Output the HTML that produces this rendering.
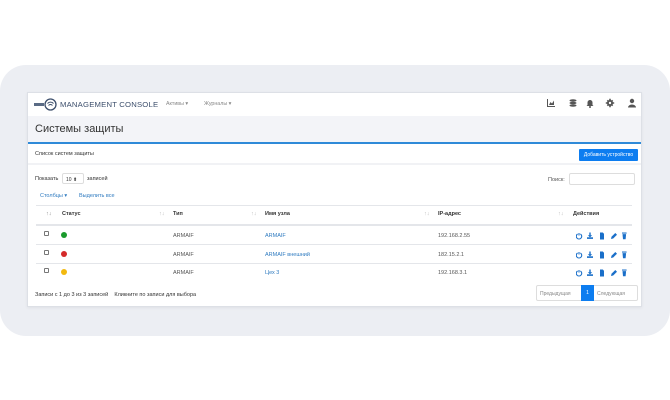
<!DOCTYPE html>
<html><head><meta charset="utf-8"><style>
*{margin:0;padding:0;box-sizing:border-box}
body{width:670px;height:400px;background:#fff;font-family:"Liberation Sans",sans-serif;position:relative;overflow:hidden;color:#333}
.bg{position:absolute;left:0;top:65px;width:670px;height:271px;background:#eceef3;border-radius:26px}
.card{position:absolute;left:27px;top:92px;width:615px;height:215px;background:#fff;border:1px solid #dde0e6;box-shadow:0 1px 3px rgba(0,0,0,.06)}
.nav{position:absolute;left:0;top:0;width:100%;height:23px;background:#fff}
.abs{position:absolute;white-space:nowrap}
.title{position:absolute;left:0;top:23px;width:100%;height:28px;background:#f3f4f8;border-bottom:2px solid #2f8ad8}
.sub{position:absolute;left:0;top:53px;width:100%;height:19px;background:#fff;border-bottom:2px solid #f1f2f5}
.t6{font-size:5.5px}
.link{color:#2f7bc0}
.dot{position:absolute;width:6px;height:6px;border-radius:50%}
.cb{position:absolute;width:5px;height:5px;border:1px solid #777;border-radius:1px}
.rowline{position:absolute;left:8px;width:596px;height:1px;background:#e4e6ea}
</style></head><body>
<svg width="0" height="0" style="position:absolute"><defs>
<g id="acts" fill="#1a6fc9">
 <path d="M3 1v2.5" stroke="#1a6fc9" stroke-width="1.1" fill="none"/><path d="M1.6 2a2.7 2.7 0 1 0 2.8 0" stroke="#1a6fc9" stroke-width="1.1" fill="none"/>
 <path d="M13.3 0.5h1.4v2.7h1.5l-2.2 2.2-2.2-2.2h1.5z"/><rect x="11" y="5.3" width="6" height="1.6"/>
 <path d="M24 0.5h2.8l1.2 1.2v5.8h-4z"/>
 <path d="M35 7l0.5-2.2 3.8-3.8 1.7 1.7-3.8 3.8z"/>
 <rect x="46" y="0.5" width="4.6" height="1.1"/><path d="M46.5 2.1h3.6l-0.5 5.2h-2.6z"/>
</g></defs></svg>
<div class="bg"></div>
<div class="card">
 <div class="nav">
  <svg class="abs" style="left:6px;top:5px" width="24" height="13"><rect x="0" y="5" width="10" height="3" fill="#5a6b85"/><circle cx="16.5" cy="6.5" r="5.5" fill="#fff" stroke="#3d4f6c" stroke-width="1.3"/><path d="M13.5 5.5a4 4 0 0 1 6 0M14.5 7.5a2.5 2.5 0 0 1 4 0" stroke="#3d4f6c" fill="none" stroke-width="1"/></svg>
  <div class="abs" style="left:32px;top:7px;font-size:7.7px;letter-spacing:.2px;color:#3d4f6c">MANAGEMENT CONSOLE</div>
  <div class="abs" style="left:138px;top:8px;font-size:5.3px;color:#888">Активы ▾</div>
  <div class="abs" style="left:176px;top:8px;font-size:5.3px;color:#888">Журналы ▾</div>
  <svg class="abs" style="left:518px;top:5px" width="92" height="12" fill="#555">
   <path d="M1 1v8h8v-1h-7v-7z"/><path d="M3 7l1.5-3 1.5 1.5 2-3v4.5h-5z"/>
   <ellipse cx="27" cy="2.5" rx="3.5" ry="1.3"/><ellipse cx="27" cy="5" rx="3.5" ry="1.3"/><ellipse cx="27" cy="7.5" rx="3.5" ry="1.3"/>
   <path d="M44 2a2.5 2.5 0 0 1 2.5 2.5v2.5l1 1h-7l1-1v-2.5a2.5 2.5 0 0 1 2.5-2.5z"/><circle cx="44" cy="9" r="1"/>
   <circle cx="64" cy="5" r="3"/><path d="M63.2 0.8h1.6v8.4h-1.6zM59.8 4.2h8.4v1.6h-8.4z"/><path d="M60.8 2.9l1.1-1.1 5.3 5.3-1.1 1.1zM66.1 1.8l1.1 1.1-5.3 5.3-1.1-1.1z"/><circle cx="64" cy="5" r="1.2" fill="#fff"/>
   <circle cx="86" cy="3" r="2.2"/><path d="M82 9.5a4 3 0 0 1 8 0z"/>
  </svg>
 </div>
 <div class="title"><div class="abs" style="left:7px;top:7px;font-size:11px;color:#333">Системы защиты</div></div>
 <div class="sub"><div class="abs t6" style="left:7px;top:5px">Список систем защиты</div>
  <div class="abs" style="left:551px;top:3px;width:59px;height:12px;background:#0d7df0;border-radius:1px;color:#fff;font-size:5px;line-height:12px;text-align:center">Добавить устройство</div></div>
 <div class="abs t6" style="left:7px;top:83px">Показать</div>
 <div class="abs" style="left:34px;top:80px;width:22px;height:11px;border:1px solid #ddd;border-radius:2px;font-size:5px;padding:3px 0 0 3px">10 ⬍</div>
 <div class="abs t6" style="left:59px;top:83px">записей</div>
 <div class="abs t6" style="left:520px;top:84px;color:#555">Поиск:</div>
 <div class="abs" style="left:541px;top:80px;width:66px;height:12px;border:1px solid #ddd;border-radius:2px"></div>
 <div class="abs t6 link" style="left:12px;top:100px">Столбцы ▾</div>
 <div class="abs t6 link" style="left:51px;top:100px">Выделить все</div>
 <div class="rowline" style="top:112px"></div>
 <div class="abs" style="top:118px;left:18px;font-size:5.5px;font-weight:bold;color:#333">
  <span class="abs" style="left:0;font-weight:normal;color:#888">↑↓</span>
  <span class="abs" style="left:16px">Статус</span><span class="abs" style="left:113px;color:#bbb;font-weight:normal">↑↓</span>
  <span class="abs" style="left:127px">Тип</span><span class="abs" style="left:205px;color:#bbb;font-weight:normal">↑↓</span>
  <span class="abs" style="left:219px">Имя узла</span><span class="abs" style="left:378px;color:#bbb;font-weight:normal">↑↓</span>
  <span class="abs" style="left:392px">IP-адрес</span><span class="abs" style="left:512px;color:#bbb;font-weight:normal">↑↓</span>
  <span class="abs" style="left:527px">Действия</span>
 </div>
 <div class="rowline" style="top:131px;height:2px"></div>
 <div class="cb" style="left:16px;top:138px"></div><div class="dot" style="left:33px;top:139px;background:#1a9a2c"></div>
 <div class="abs t6" style="left:145px;top:140px;color:#555">ARMAIF</div><div class="abs t6 link" style="left:237px;top:140px">ARMAIF</div><div class="abs t6" style="left:410px;top:140px;color:#555">192.168.2.55</div>
 <svg class="abs" style="left:548px;top:139px" width="52" height="8"><use href="#acts"/></svg>
 <div class="rowline" style="top:151px"></div>
 <div class="cb" style="left:16px;top:157px"></div><div class="dot" style="left:33px;top:158px;background:#d42a2a"></div>
 <div class="abs t6" style="left:145px;top:159px;color:#555">ARMAIF</div><div class="abs t6 link" style="left:237px;top:159px">ARMAIF внешний</div><div class="abs t6" style="left:410px;top:159px;color:#555">182.15.2.1</div>
 <svg class="abs" style="left:548px;top:158px" width="52" height="8"><use href="#acts"/></svg>
 <div class="rowline" style="top:170px"></div>
 <div class="cb" style="left:16px;top:175px"></div><div class="dot" style="left:33px;top:176px;background:#f2b90f"></div>
 <div class="abs t6" style="left:145px;top:177px;color:#555">ARMAIF</div><div class="abs t6 link" style="left:237px;top:177px">Цех 3</div><div class="abs t6" style="left:410px;top:177px;color:#555">192.168.3.1</div>
 <svg class="abs" style="left:548px;top:176px" width="52" height="8"><use href="#acts"/></svg>
 <div class="abs t6" style="left:7px;top:199px">Записи с 1 до 3 из 3 записей &nbsp;&nbsp; Кликните по записи для выбора</div>
 <div class="abs" style="left:508px;top:192px;width:102px;height:16px;border:1px solid #ddd;border-radius:2px;font-size:5px;color:#888">
  <span class="abs" style="left:3px;top:5px">Предыдущая</span>
  <span class="abs" style="left:44px;top:-1px;width:13px;height:16px;background:#0d7df0;color:#fff;text-align:center;line-height:16px">1</span>
  <span class="abs" style="left:60px;top:5px">Следующая</span>
 </div>
</div>
</body></html>
